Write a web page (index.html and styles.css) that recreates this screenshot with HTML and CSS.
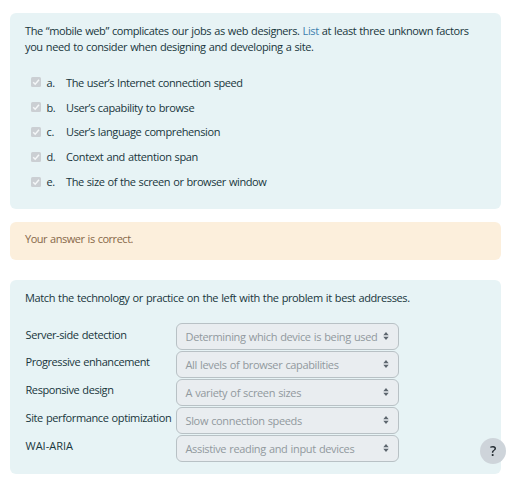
FILE: index.html
```
<!DOCTYPE html>
<html lang="en">
<head>
<meta charset="utf-8">
<title>Quiz review</title>
<link rel="stylesheet" href="styles.css">
</head>
<body>
<main class="review">
  <section class="card question">
    <p class="prompt"><span class="line first">The “mobile web” complicates our jobs as web designers. <a class="term">List</a> at least three unknown factors</span><span class="line second">you need to consider when designing and developing a site.</span></p>
    <ul class="options">
      <li><svg class="check" viewBox="0 0 10 10"><rect width="10" height="10" rx="1.5"/><path d="M2.2 5.2l2 2 3.8-4.4"/></svg><span class="letter">a.</span><span class="tight">The user’s Internet connection speed</span></li>
      <li><svg class="check" viewBox="0 0 10 10"><rect width="10" height="10" rx="1.5"/><path d="M2.2 5.2l2 2 3.8-4.4"/></svg><span class="letter">b.</span><span>User’s capability to browse</span></li>
      <li><svg class="check" viewBox="0 0 10 10"><rect width="10" height="10" rx="1.5"/><path d="M2.2 5.2l2 2 3.8-4.4"/></svg><span class="letter">c.</span><span>User’s language comprehension</span></li>
      <li><svg class="check" viewBox="0 0 10 10"><rect width="10" height="10" rx="1.5"/><path d="M2.2 5.2l2 2 3.8-4.4"/></svg><span class="letter">d.</span><span>Context and attention span</span></li>
      <li><svg class="check" viewBox="0 0 10 10"><rect width="10" height="10" rx="1.5"/><path d="M2.2 5.2l2 2 3.8-4.4"/></svg><span class="letter">e.</span><span class="tight">The size of the screen or browser window</span></li>
    </ul>
  </section>
  <section class="card feedback"><span class="tighter">Your answer is correct.</span></section>
  <section class="card matching">
    <p class="prompt match-prompt">Match the technology or practice on the left with the problem it best addresses.</p>
    <div class="pairs">
      <div class="pair"><span class="name">Server-side detection</span><div class="select"><span>Determining which device is being used</span><svg viewBox="0 0 6 8"><path d="M3 0l2.7 3.2H.3zM3 8L.3 4.8h5.4z"/></svg></div></div>
      <div class="pair"><span class="name tight">Progressive enhancement</span><div class="select"><span>All levels of browser capabilities</span><svg viewBox="0 0 6 8"><path d="M3 0l2.7 3.2H.3zM3 8L.3 4.8h5.4z"/></svg></div></div>
      <div class="pair"><span class="name tight">Responsive design</span><div class="select"><span>A variety of screen sizes</span><svg viewBox="0 0 6 8"><path d="M3 0l2.7 3.2H.3zM3 8L.3 4.8h5.4z"/></svg></div></div>
      <div class="pair"><span class="name">Site performance optimization</span><div class="select"><span>Slow connection speeds</span><svg viewBox="0 0 6 8"><path d="M3 0l2.7 3.2H.3zM3 8L.3 4.8h5.4z"/></svg></div></div>
      <div class="pair"><span class="name loose">WAI-ARIA</span><div class="select"><span>Assistive reading and input devices</span><svg viewBox="0 0 6 8"><path d="M3 0l2.7 3.2H.3zM3 8L.3 4.8h5.4z"/></svg></div></div>
    </div>
  </section>
</main>
<div class="help">?</div>
</body>
</html>
```
FILE: styles.css
```
* { box-sizing: border-box; }
body {
  margin: 0;
  height: 489px;
  overflow: hidden;
  background: #fff;
  color: #18363c;
  font: 11px/16px "Open Sans", "Noto Sans", sans-serif;
  letter-spacing: -0.38px;
  word-spacing: 0.6px;
}
.review { padding: 13px 10px 0; width: 511px; }
.card { width: 490.5px; border-radius: 6px; background: #e7f3f5; white-space: nowrap; }
.question { height: 196px; padding: 10px 15px; }
.prompt { margin: 0; }
.line { display: block; }
.first { letter-spacing: -0.4px; }
.second, .match-prompt { letter-spacing: -0.38px; }
.tight { letter-spacing: -0.42px; }
.tighter { letter-spacing: -0.47px; }
.loose { letter-spacing: 0; }
.term { color: #3d80ae; }
.options { list-style: none; margin: 15px 0 0; padding: 0 0 0 5.5px; }
.options li { display: flex; align-items: center; height: 24.8px; }
.options span { padding-top: 1px; }
.check { width: 10px; height: 10px; flex: none; }
.check rect { fill: #cbcfd3; }
.check path { fill: none; stroke: #f5f7f8; stroke-width: 1.5; }
.letter { width: 19.5px; margin-left: 6px; }
.feedback { height: 38px; margin-top: 13px; padding: 9px 15px; background: #fcefdc; color: #876849; }
.matching { height: 193.5px; margin-top: 20px; padding: 10px 15px; }
.pairs { margin-top: 17px; }
.pair { display: flex; height: 28px; }
.name { width: 151px; padding: 4px 0 0 0.5px; }
.pair:nth-child(n+2) .name { padding-top: 3px; }
.select {
  display: flex;
  justify-content: space-between;
  width: 222.5px;
  height: 27px;
  padding: 5px 9px 0 8.5px;
  border: 1px solid #b8c1c5;
  border-radius: 6px;
  background: #e9edf0;
  color: #91999e;
  letter-spacing: -0.35px;
}
.select svg { width: 6px; height: 8px; margin-top: 3px; fill: #5d666e; }
.help {
  position: fixed;
  left: 480px;
  top: 438px;
  width: 26px;
  height: 26px;
  border-radius: 50%;
  background: #ced4da;
  color: #222930;
  font-size: 14px;
  font-weight: 600;
  line-height: 26px;
  text-align: center;
}
```
